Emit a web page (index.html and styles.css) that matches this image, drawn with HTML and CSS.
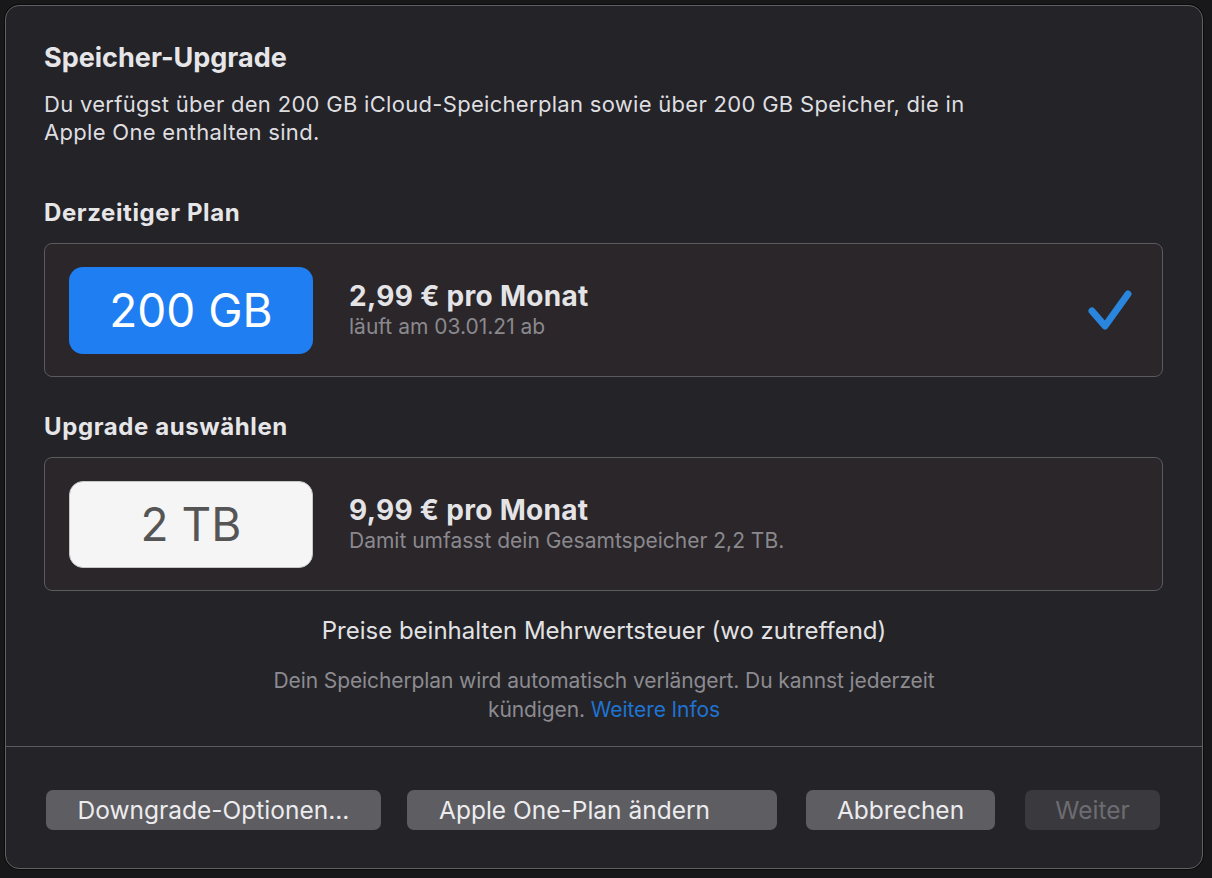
FILE: index.html
```html
<!DOCTYPE html>
<html>
<head>
  <meta name="viewport" content="width=device-width, initial-scale=1">
  <link rel="stylesheet" href="styles.css">
</head>
<body>
  <div class="dialog">
    <div class="content">
      <h1 class="title">Speicher-Upgrade</h1>
      <p class="intro">Du verfügst über den 200 GB iCloud-Speicherplan sowie über 200 GB Speicher, die in<br>Apple One enthalten sind.</p>

      <h2 class="section-title">Derzeitiger Plan</h2>
      <div class="plan">
        <div class="size size-current">200 GB</div>
        <div class="plan-info">
          <div class="price">2,99 € pro Monat</div>
          <div class="note">läuft am 03.01.21 ab</div>
        </div>
        <svg class="check" width="50" height="50" viewBox="0 0 50 50">
          <polyline points="10,26 23,41 46,9" fill="none" stroke="#2a85dc" stroke-width="7" stroke-linecap="round" stroke-linejoin="round"/>
        </svg>
      </div>

      <h2 class="section-title">Upgrade auswählen</h2>
      <div class="plan">
        <div class="size size-option">2 TB</div>
        <div class="plan-info">
          <div class="price">9,99 € pro Monat</div>
          <div class="note">Damit umfasst dein Gesamtspeicher 2,2 TB.</div>
        </div>
      </div>

      <p class="vat">Preise beinhalten Mehrwertsteuer (wo zutreffend)</p>
      <p class="fine">Dein Speicherplan wird automatisch verlängert. Du kannst jederzeit<br>kündigen. <a href="#" class="link">Weitere Infos</a></p>
    </div>

    <div class="footer">
      <button class="btn btn-downgrade">Downgrade-Optionen...</button>
      <button class="btn btn-apple">Apple One-Plan ändern</button>
      <button class="btn btn-cancel">Abbrechen</button>
      <button class="btn btn-next" disabled>Weiter</button>
    </div>
  </div>
</body>
</html>
```

FILE: styles.css
```css
body {
  font-family: Inter, "Liberation Sans", Arial, sans-serif;
  margin: 0;
  padding: 5px;
  background-color: #18181a;
  box-sizing: border-box;
}
.dialog {
  width: 1198px;
  height: 864px;
  box-sizing: border-box;
  background-color: #242328;
  border: 1px solid #605f64;
  border-radius: 14px;
  box-shadow: 0 0 0 1px #0c0c0d;
  display: flex;
  flex-direction: column;
}
.content {
  padding: 36px 38px 0 38px;
  flex: 1;
}
.title {
  margin: 0;
  font-size: 27px;
  line-height: 32px;
  font-weight: 700;
  color: #e6e6e8;
}
.intro {
  margin: 16px 0 0 0;
  font-size: 22px;
  line-height: 28px;
  letter-spacing: 0.3px;
  color: #dedee0;
}
.section-title {
  margin: 52px 0 0 0;
  font-size: 24px;
  line-height: 30px;
  letter-spacing: 0.6px;
  font-weight: 700;
  color: #e6e6e8;
}
.plan + .section-title {
  margin-top: 35px;
}
.plan {
  margin-top: 15px;
  margin-right: 1px;
  height: 134px;
  box-sizing: border-box;
  padding: 0 24px;
  border: 1px solid #5b5a5f;
  border-radius: 8px;
  background-color: #2a262a;
  display: flex;
  align-items: center;
}
.size {
  width: 244px;
  height: 87px;
  box-sizing: border-box;
  border-radius: 14px;
  display: flex;
  align-items: center;
  justify-content: center;
  font-size: 46px;
  font-weight: 400;
  flex-shrink: 0;
}
.size-current {
  background-color: #1f7ff2;
  color: #ffffff;
}
.size-option {
  background-color: #f5f5f5;
  border: 1.5px solid #c6c6c6;
  color: #555555;
}
.plan-info {
  margin-left: 36px;
  display: flex;
  flex-direction: column;
}
.price {
  font-size: 28px;
  line-height: 32px;
  letter-spacing: 0.3px;
  font-weight: 700;
  color: #e4e4e6;
}
.note {
  margin-top: 2px;
  font-size: 21px;
  line-height: 26px;
  color: #8a898e;
}
.check {
  margin-left: auto;
  margin-right: 6px;
}
.vat {
  margin: 26px 0 0 0;
  text-align: center;
  font-size: 24px;
  line-height: 28px;
  color: #e2e2e4;
}
.fine {
  margin: 21px 0 0 0;
  text-align: center;
  font-size: 21px;
  line-height: 29px;
  letter-spacing: -0.1px;
  color: #8c8b90;
}
.link {
  color: #1f73d2;
  text-decoration: none;
}
.footer {
  border-top: 1px solid #5c5b60;
  padding: 43px 40px 38px 40px;
  display: flex;
  align-items: center;
}
.btn {
  height: 40px;
  box-sizing: border-box;
  border: none;
  border-radius: 7px;
  background-color: #5e5d62;
  color: #ececee;
  font-family: Inter, "Liberation Sans", Arial, sans-serif;
  font-size: 24.5px;
  padding: 0;
  cursor: pointer;
}
.btn-downgrade {
  width: 335px;
}
.btn-apple {
  width: 370px;
  margin-left: 26px;
  text-align: left;
  padding-left: 32px;
}
.btn-cancel {
  width: 189px;
  margin-left: 29px;
}
.btn-next {
  width: 135px;
  margin-left: 30px;
  background-color: #3a393e;
  color: #6d6c71;
  cursor: default;
}
```
